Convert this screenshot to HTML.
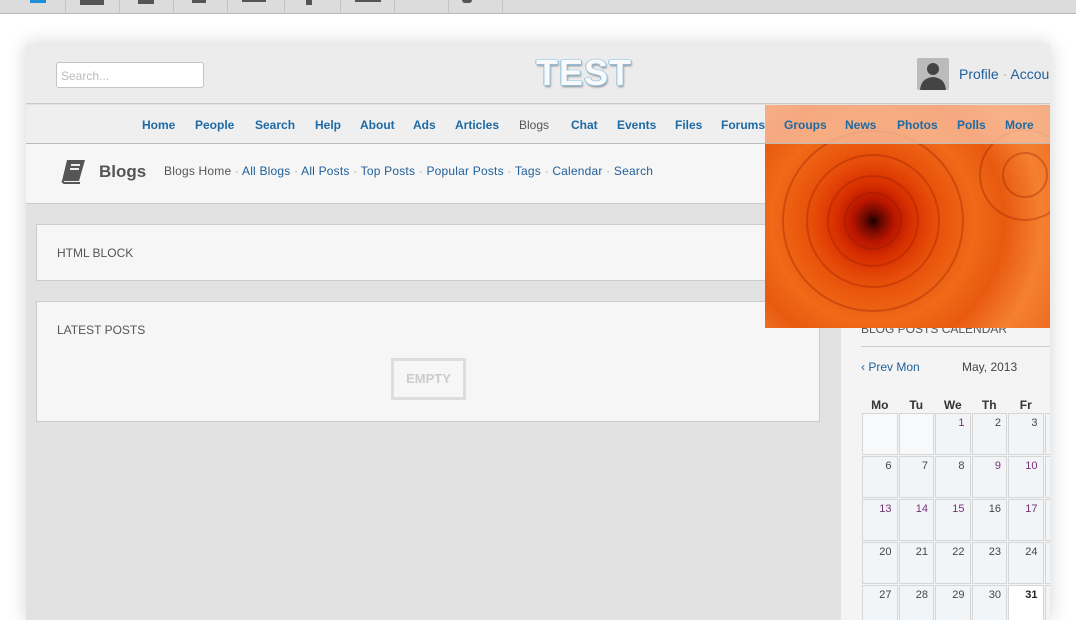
<!DOCTYPE html>
<html><head><meta charset="utf-8"><style>
*{margin:0;padding:0;box-sizing:border-box}
body{width:1076px;height:620px;overflow:hidden;background:#fff;font-family:"Liberation Sans",Arial,sans-serif;font-size:12px;position:relative}
.top{position:absolute;left:0;top:0;width:1076px;height:14px;background:#dcdcdc;border-bottom:1px solid #bbb}
.top i{position:absolute;top:0;width:1px;height:13px;background:#c4c4c4}
.top b{position:absolute;top:0;height:5px;background:#555}
.card{position:absolute;left:26px;top:44px;width:1024px;height:576px;background:#e2e2e2;box-shadow:0 0 18px rgba(0,0,0,.18);overflow:hidden}
.hdr{position:absolute;left:0;top:0;width:1024px;height:60px;background:#ececec;border-bottom:1px solid #c9c9c9}
.search{position:absolute;left:30px;top:18px;width:148px;height:26px;border:1px solid #c4c4c4;border-radius:3px;background:#fff;color:#bbb;padding:6px 4px;font-size:12px}
.logo{position:absolute;left:510px;top:8px;font-size:36px;font-weight:bold;color:#fafafa;letter-spacing:1px;text-shadow:1px 0 0 #8cc0e0,-1px 0 0 #8cc0e0,0 1px 0 #8cc0e0,0 -1px 0 #b8d8ec,1px 2px 2px #888}
.avatar{position:absolute;left:891px;top:14px;width:32px;height:32px;background:#bbb;border-radius:2px;overflow:hidden}
.prof{position:absolute;left:933px;top:22px;font-size:14px;color:#1f5f9a;white-space:nowrap}
.prof span{color:#aaa}
.nav{position:absolute;left:0;top:61px;width:1024px;height:39px;background:#efefef;border-bottom:1px solid #bbb}
.nav a{position:absolute;top:13px;font-size:12px;font-weight:bold;color:#1d6aa5;text-decoration:none}
.flower{position:absolute;left:739px;top:61px;width:285px;height:223px;overflow:hidden;background:
radial-gradient(circle at 38% 52%,#1a0000 0,#6a0800 4%,#b81500 10%,#d83000 18%,#e8500a 30%,#f06a18 48%,#e85a10 62%,#f58030 80%,#ec6a20 100%)}
.flower .ov{position:absolute;left:0;top:0;width:285px;height:39px;background:rgba(250,195,165,.75);border-bottom:1px solid #bbb}
.flower .n{position:absolute;top:13px;font-size:12px;font-weight:bold;color:#1d6aa5}
.sub{position:absolute;left:0;top:100px;width:794px;height:60px;background:#f6f6f6;border-bottom:1px solid #ccc}
.sub .t{position:absolute;left:73px;top:18px;font-size:17px;font-weight:bold;color:#555}
.sub .l{position:absolute;left:138px;top:20px;font-size:12px;color:#555;white-space:nowrap;letter-spacing:0.2px}
.sub .l a{color:#1f5f9a}
.sub .l span{color:#aaa}
.box{position:absolute;left:10px;width:784px;background:#f6f6f6;border:1px solid #ccc}
.box .h{position:absolute;left:20px;font-size:12px;color:#555}
.empty{position:absolute;left:354px;top:56px;width:75px;height:42px;border:3px solid #ddd;color:#ccc;font-weight:bold;font-size:13px;text-align:center;line-height:36px}
.right{position:absolute;left:815px;top:284px;width:209px;height:292px;background:#f4f4f4}
.cal{position:absolute;left:20px;top:69px;width:220px;table-layout:fixed;border-collapse:separate;border-spacing:1px 1px}
.cal th{font-size:12px;color:#333;height:13px;padding:0;text-align:center}
.cal td{border:1px solid #d6d6d6;background:#f2f5f8;height:42px;vertical-align:top;text-align:right;padding:3px 5px 0 0;font-size:11px;color:#444}
.p{color:#737 !important}
</style></head><body>
<div class="top">
<i style="left:65px"></i><i style="left:119px"></i><i style="left:173px"></i><i style="left:227px"></i><i style="left:284px"></i><i style="left:340px"></i><i style="left:394px"></i><i style="left:448px"></i><i style="left:502px"></i>
<b style="left:30px;width:16px;background:#1e8fd6;height:3px"></b><b style="left:80px;width:24px"></b><b style="left:138px;width:16px;height:4px"></b><b style="left:192px;width:14px;height:3px"></b><b style="left:242px;width:24px;height:2px"></b><b style="left:306px;width:6px"></b><b style="left:355px;width:26px;height:2px"></b><b style="left:462px;width:10px;height:3px;border-radius:0 0 5px 5px"></b>
</div>
<div class="card">
<div class="hdr">
<div class="search">Search...</div>
<div class="logo">TEST</div>
<div class="avatar"><svg width="32" height="32"><circle cx="16" cy="11" r="6" fill="#444"/><path d="M3 32 Q4 20 16 19 Q28 20 29 32Z" fill="#444"/></svg></div>
<div class="prof">Profile <span>·</span> Account</div>
</div>
<div class="nav">
<a style="left:116px">Home</a><a style="left:169px">People</a><a style="left:229px">Search</a><a style="left:289px">Help</a><a style="left:334px">About</a><a style="left:387px">Ads</a><a style="left:429px">Articles</a><a style="left:493px;color:#555;font-weight:normal">Blogs</a><a style="left:545px">Chat</a><a style="left:591px">Events</a><a style="left:649px">Files</a><a style="left:695px">Forums</a>
</div>
<div class="sub">
<svg style="position:absolute;left:33px;top:14px" width="30" height="26"><path d="M8 2 H26 L20 23 H3 Z" fill="#555"/><path d="M3 23 L5 25 H21" stroke="#555" fill="none" stroke-width="2"/><rect x="12" y="6" width="9" height="2" fill="#eee"/><rect x="11" y="10" width="9" height="2" fill="#eee"/></svg>
<div class="t">Blogs</div>
<div class="l">Blogs Home <span>·</span> <a>All Blogs</a> <span>·</span> <a>All Posts</a> <span>·</span> <a>Top Posts</a> <span>·</span> <a>Popular Posts</a> <span>·</span> <a>Tags</a> <span>·</span> <a>Calendar</a> <span>·</span> <a>Search</a></div>
</div>
<div class="box" style="top:180px;height:57px"><div class="h" style="top:21px">HTML BLOCK</div></div>
<div class="box" style="top:257px;height:121px"><div class="h" style="top:21px">LATEST POSTS</div><div class="empty">EMPTY</div></div>
<div class="right">
<div style="position:absolute;left:20px;top:-6px;color:#555;font-size:12px">BLOG POSTS CALENDAR</div>
<div style="position:absolute;left:20px;top:18px;width:189px;border-top:1px solid #ccc"></div>
<div style="position:absolute;left:20px;top:32px;color:#1f5f9a">‹ Prev Mon</div>
<div style="position:absolute;left:121px;top:32px;color:#444">May, 2013</div>
<table class="cal">
<tr><th>Mo</th><th>Tu</th><th>We</th><th>Th</th><th>Fr</th><th></th></tr>
<tr><td style="background:#f8f9fb"></td><td style="background:#f8f9fb"></td><td class="p">1</td><td>2</td><td>3</td><td></td></tr>
<tr><td>6</td><td>7</td><td>8</td><td class="p">9</td><td class="p">10</td><td></td></tr>
<tr><td class="p">13</td><td class="p">14</td><td class="p">15</td><td>16</td><td class="p">17</td><td></td></tr>
<tr><td>20</td><td>21</td><td>22</td><td>23</td><td>24</td><td></td></tr>
<tr><td>27</td><td>28</td><td>29</td><td>30</td><td style="background:#fff;font-weight:bold;color:#222">31</td><td></td></tr>
</table>
</div>
<div class="flower"><svg width="285" height="223" style="position:absolute;left:0;top:0;opacity:.3"><g fill="none" stroke="#8a1500" stroke-width="2"><circle cx="108" cy="116" r="14"/><circle cx="108" cy="116" r="28"/><circle cx="108" cy="116" r="45"/><circle cx="108" cy="116" r="66"/><circle cx="108" cy="116" r="90"/><circle cx="260" cy="70" r="45"/><circle cx="260" cy="70" r="22"/></g></svg><div class="ov"></div>
<div class="n" style="left:19px">Groups</div>
<div class="n" style="left:80px">News</div>
<div class="n" style="left:132px">Photos</div>
<div class="n" style="left:192px">Polls</div>
<div class="n" style="left:240px">More</div>
</div>
</div>
</body></html>
